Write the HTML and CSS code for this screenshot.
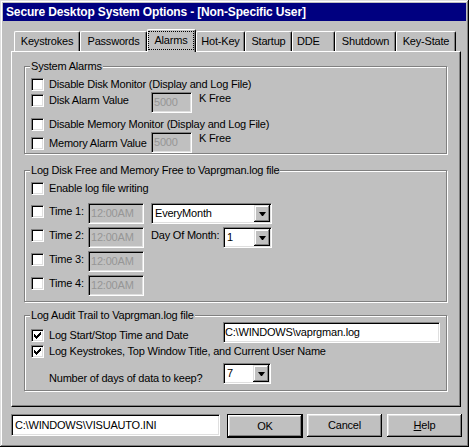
FILE: index.html
```html
<!DOCTYPE html>
<html>
<head>
<meta charset="utf-8">
<title>Secure Desktop System Options</title>
<link rel="stylesheet" href="styles.css">
</head>
<body>
<div class="window">
  <div class="titlebar">Secure Desktop System Options - [Non-Specific User]</div>
  <div class="client">
    <div class="tabs">
      <div class="tab t-keys">Keystrokes</div>
      <div class="tab t-pass">Passwords</div>
      <div class="tab tab-active t-alarms"><span class="focus">Alarms</span></div>
      <div class="tab t-hot">Hot-Key</div>
      <div class="tab t-start">Startup</div>
      <div class="tab t-dde">DDE</div>
      <div class="tab t-shut">Shutdown</div>
      <div class="tab t-state">Key-State</div>
    </div>
    <div class="panel">
      <div class="group g1">
        <span class="legend">System Alarms</span>
        <div class="row g1-r1">
          <div class="check"><span class="box"></span><span class="lbl">Disable Disk Monitor (Display and Log File)</span></div>
        </div>
        <div class="row g1-r2">
          <div class="check w-alarm dn2"><span class="box"></span><span class="lbl">Disk Alarm Value</span></div>
          <div class="field disabled w-num">5000</div>
          <span class="unit">K Free</span>
        </div>
        <div class="row g1-r3">
          <div class="check"><span class="box"></span><span class="lbl">Disable Memory Monitor (Display and Log File)</span></div>
        </div>
        <div class="row g1-r4">
          <div class="check w-alarm dn5"><span class="box"></span><span class="lbl">Memory Alarm Value</span></div>
          <div class="field disabled w-num">5000</div>
          <span class="unit">K Free</span>
        </div>
      </div>

      <div class="group g2">
        <span class="legend">Log Disk Free and Memory Free to Vaprgman.log file</span>
        <div class="row g2-r1">
          <div class="check"><span class="box"></span><span class="lbl">Enable log file writing</span></div>
        </div>
        <div class="row time-row first-time">
          <div class="check w-time dn2"><span class="box"></span><span class="lbl">Time 1:</span></div>
          <div class="field disabled w-time-field">12:00AM</div>
          <div class="combo w-every"><span class="val">EveryMonth</span><span class="drop"><span class="arrow"></span></span></div>
        </div>
        <div class="row time-row">
          <div class="check w-time dn2"><span class="box"></span><span class="lbl">Time 2:</span></div>
          <div class="field disabled w-time-field">12:00AM</div>
          <span class="text dom dn2">Day Of Month:</span>
          <div class="combo w-small"><span class="val">1</span><span class="drop"><span class="arrow"></span></span></div>
        </div>
        <div class="row time-row">
          <div class="check w-time dn2"><span class="box"></span><span class="lbl">Time 3:</span></div>
          <div class="field disabled w-time-field">12:00AM</div>
        </div>
        <div class="row time-row">
          <div class="check w-time dn2"><span class="box"></span><span class="lbl">Time 4:</span></div>
          <div class="field disabled w-time-field">12:00AM</div>
        </div>
      </div>

      <div class="group g3">
        <span class="legend">Log Audit Trail to Vaprgman.log file</span>
        <div class="row g3-r1">
          <div class="check w-audit dn7"><span class="box checked"><svg width="7" height="7" viewBox="0 0 7 7" shape-rendering="crispEdges"><path d="M0 2h1v3H0zM1 3h1v3H1zM2 4h1v3H2zM3 3h1v3H3zM4 2h1v3H4zM5 1h1v3H5zM6 0h1v3H6z"/></svg></span><span class="lbl">Log Start/Stop Time and Date</span></div>
          <div class="field w-logfile">C:\WINDOWS\vaprgman.log</div>
        </div>
        <div class="row g3-r2">
          <div class="check"><span class="box checked"><svg width="7" height="7" viewBox="0 0 7 7" shape-rendering="crispEdges"><path d="M0 2h1v3H0zM1 3h1v3H1zM2 4h1v3H2zM3 3h1v3H3zM4 2h1v3H4zM5 1h1v3H5zM6 0h1v3H6z"/></svg></span><span class="lbl">Log Keystrokes, Top Window Title, and Current User Name</span></div>
        </div>
        <div class="row g3-r3">
          <span class="text days">Number of days of data to keep?</span>
          <div class="combo w-days"><span class="val">7</span><span class="drop"><span class="arrow"></span></span></div>
        </div>
      </div>
    </div>

    <div class="bottom">
      <div class="field w-path">C:\WINDOWS\VISUAUTO.INI</div>
      <div class="btn btn-default">OK</div>
      <div class="btn btn-cancel">Cancel</div>
      <div class="btn btn-help"><span class="u">H</span>elp</div>
    </div>
  </div>
</div>
</body>
</html>
```

FILE: styles.css
```css
* { box-sizing: border-box; }

html, body {
  margin: 0;
  padding: 0;
  background: #c0c0c0;
}

body {
  font-family: "Liberation Sans", Arial, sans-serif;
  font-size: 11px;
  letter-spacing: -0.2px;
  color: #000;
}

.window {
  width: 469px;
  height: 447px;
  padding: 3px;
  background: #c0c0c0;
  box-shadow: inset -1px -1px #000, inset 1px 1px #dfdfdf, inset -2px -2px #808080, inset 2px 2px #fff;
}

.titlebar {
  height: 18px;
  background: #000080;
  color: #fff;
  font-weight: bold;
  font-size: 12px;
  letter-spacing: -0.15px;
  line-height: 18px;
  padding-left: 3px;
  white-space: nowrap;
}

.client {
  padding: 8px 0 0 8px;
}

/* tabs */
.tabs {
  display: flex;
  align-items: flex-end;
  height: 22px;
  padding-left: 3px;
}

.tab {
  flex: none;
  height: 20px;
  border-top: 1px solid #fff;
  border-left: 1px solid #fff;
  border-right: 1px solid #000;
  border-radius: 2px 2px 0 0;
  box-shadow: inset -1px 0 #808080;
  text-align: center;
  line-height: 19px;
  white-space: nowrap;
  background: #c0c0c0;
}

.t-keys { width: 66px; }
.t-pass { width: 67px; }
.t-alarms { width: 49px; }
.t-hot { width: 49px; }
.t-start { width: 47px; }
.t-dde { width: 43px; text-align: left; padding-left: 4px; }
.t-shut { width: 61px; }
.t-state { width: 60px; }

.tab-active {
  height: 23px;
  margin-bottom: -1px;
  position: relative;
  z-index: 1;
}

.focus {
  display: block;
  width: 46px;
  height: 19px;
  margin-top: 1px;
  border: 1px dotted #000;
  line-height: 16px;
}

/* panel */
.panel {
  width: 450px;
  height: 356px;
  border-top: 1px solid #fff;
  border-left: 1px solid #fff;
  border-right: 1px solid #000;
  border-bottom: 1px solid #000;
  box-shadow: inset -1px -1px #808080;
  padding: 14px 0 0 12px;
}

.group {
  width: 423px;
  border: 1px solid #808080;
  box-shadow: inset 1px 1px #fff, 1px 1px #fff;
  padding-left: 6px;
}

.g1 { height: 88px; }
.g2 { height: 132px; margin-top: 16px; }
.g3 { height: 76px; margin-top: 13px; }

.legend {
  display: block;
  width: max-content;
  height: 14px;
  margin: -8px 0 0 -1px;
  padding: 0 1px;
  line-height: 14px;
  background: #c0c0c0;
  white-space: nowrap;
}

.row {
  display: flex;
  align-items: flex-start;
}

.check {
  flex: none;
  display: flex;
  align-items: center;
  height: 13px;
}

.box {
  flex: none;
  width: 13px;
  height: 13px;
  background: #fff;
  border: 1px solid;
  border-color: #808080 #fff #fff #808080;
  box-shadow: inset 1px 1px #000, inset -1px -1px #dfdfdf;
  display: flex;
  align-items: center;
  justify-content: center;
}

.box svg { display: block; fill: #000; }

.lbl {
  margin-left: 5px;
  line-height: 13px;
  white-space: nowrap;
}

.dn2 { margin-top: 2px; }
.dn5 { margin-top: 5px; }
.dn7 { margin-top: 7px; }

.w-alarm { width: 120px; }
.w-time { width: 57px; }
.w-audit { width: 192px; }

.field {
  flex: none;
  height: 21px;
  border: 1px solid;
  border-color: #808080 #fff #fff #808080;
  box-shadow: inset 1px 1px #000, inset -1px -1px #dfdfdf;
  background: #fff;
  padding: 0 0 0 2px;
  line-height: 19px;
  white-space: nowrap;
  overflow: hidden;
}

.field.disabled {
  background: #c0c0c0;
  color: #969696;
}

.w-num { width: 41px; }
.w-time-field { width: 56px; }
.w-logfile { width: 217px; padding-left: 1px; }
.w-path { width: 209px; height: 22px; line-height: 20px; padding-left: 3px; }

.unit {
  margin-left: 7px;
  line-height: 13px;
  white-space: nowrap;
}

.text {
  flex: none;
  line-height: 13px;
  white-space: nowrap;
}

.dom { width: 72px; margin-left: 7px; }
.days { width: 174px; margin-left: 18px; margin-top: 9px; }

.combo {
  flex: none;
  display: flex;
  height: 21px;
  padding: 1px;
  border: 1px solid;
  border-color: #808080 #fff #fff #808080;
  box-shadow: inset 1px 1px #000, inset -1px -1px #dfdfdf;
  background: #fff;
}

.w-every { width: 121px; margin-left: 7px; }
.w-small { width: 49px; }
.w-days { width: 48px; }

.val {
  flex: 1;
  padding-left: 2px;
  line-height: 17px;
  white-space: nowrap;
}

.drop {
  flex: none;
  width: 16px;
  height: 17px;
  background: #c0c0c0;
  box-shadow: inset -1px -1px #000, inset 1px 1px #dfdfdf, inset -2px -2px #808080, inset 2px 2px #fff;
  display: flex;
  align-items: center;
  justify-content: center;
}

.arrow {
  width: 1px;
  height: 0;
  border-top: 4px solid #000;
  border-left: 3px solid transparent;
  border-right: 3px solid transparent;
  box-sizing: content-box;
}

/* row spacing */
.g1-r1 { margin-top: 5px; }
.g1-r2 { margin-top: 1px; }
.g1-r3 { margin-top: 5px; }
.g1-r4 { margin-top: 1px; }

.g2-r1 { margin-top: 5px; }
.time-row { margin-top: 3px; }
.time-row.first-time { margin-top: 8px; }

.g3-r1 { margin-top: 0; }
.g3-r2 { margin-top: 2px; }
.g3-r3 { margin-top: 5px; }

/* bottom bar */
.bottom {
  display: flex;
  align-items: flex-start;
  margin-top: 7px;
}

.btn {
  flex: none;
  width: 75px;
  height: 23px;
  background: #c0c0c0;
  box-shadow: inset -1px -1px #000, inset 1px 1px #fff, inset -2px -2px #808080, inset 2px 2px #dfdfdf;
  text-align: center;
  line-height: 23px;
  white-space: nowrap;
}

.btn-default {
  width: 76px;
  height: 24px;
  margin-left: 7px;
  border: 1px solid #000;
  line-height: 22px;
}

.btn-cancel { margin-left: 4px; }
.btn-help { margin-left: 5px; }

.u { text-decoration: underline; }
```
